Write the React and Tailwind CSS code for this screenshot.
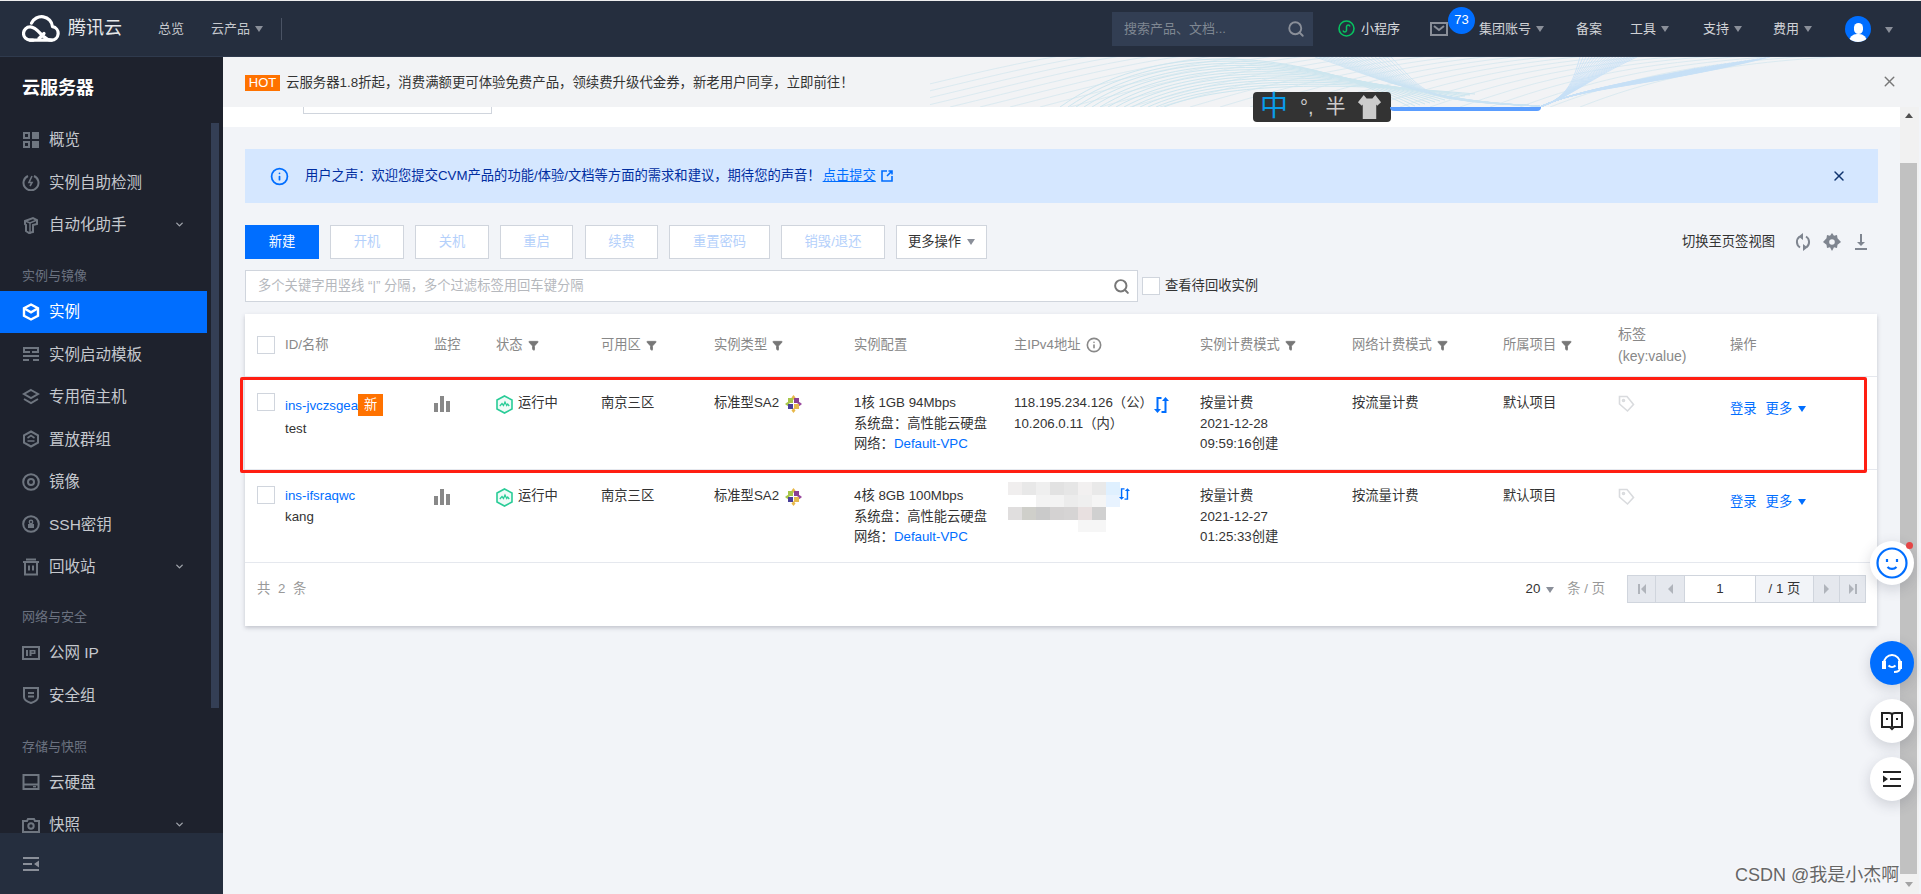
import React from 'react'
import { Search, Filter, Info, X, ChevronDown } from 'lucide-react'

const fontCls = "font-['Liberation_Sans','Noto_Sans_CJK_SC',sans-serif]"

const Caret = ({ className = 'border-t-[#8a8f99]' }) => (
  <span className={`inline-block w-0 h-0 border-x-[4.5px] border-x-transparent border-t-[6px] ${className}`} />
)

function Logo() {
  return (
    <svg width="38" height="27" viewBox="0 0 38 27" fill="none" stroke="#fff" strokeWidth="3.2" strokeLinecap="round" strokeLinejoin="round">
      <path d="M8 25.2h21.5a6.8 6.8 0 0 0 1-13.5 11 11 0 0 0-21-3.5" />
      <path d="M11 25.2H8.2a6.7 6.7 0 0 1 0-13.4c5.5 0 9.5 6.3 13 9.5 2 1.9 4.5 3.9 8.3 3.9" />
      <path d="M17 23.5l5-5" />
    </svg>
  )
}

// the line art behind the promo strip
function Waves() {
  const left = []
  for (let i = 0; i < 26; i++) {
    const o = i * 5
    left.push(`M${i * 30 - 100} 50 C ${i * 30 + 40} ${20 - i}, ${i * 30 + 140} ${-15 + o / 6}, ${i * 30 + 260} ${-10}`)
  }
  const hump = []
  for (let i = 0; i < 14; i++) {
    hump.push(`M${130 + i * 8} 50 C ${220 + i * 6} ${-14 + i * 3}, ${360 + i * 4} ${-14 + i * 3}, ${480 + i * 5} ${50 - i}`)
  }
  const swoop = []
  for (let i = 0; i < 20; i++) {
    swoop.push(`M${385 + i * 4} 0 C ${440 + i * 3} ${18 + i}, ${490} ${44}, ${610} 49`)
  }
  const funnel = []
  for (let i = 0; i < 20; i++) {
    funnel.push(`M${610} 50 C ${640} ${40}, ${644 + i} ${20}, ${650 + i * 3} 0`)
    funnel.push(`M${610} 50 C ${650} ${30}, ${720 + i * 3} ${30 - i}, ${840 - i * 4} ${i * 0.6}`)
  }
  return (
    <svg className="absolute left-[707px] top-0 opacity-80" width="1020" height="50" viewBox="0 0 1020 50" fill="none">
      <g stroke="#cfe6ef" strokeWidth="0.8">
        {left.map((d, i) => <path key={i} d={d} />)}
      </g>
      <g stroke="#c4e3ee" strokeWidth="1">
        {hump.map((d, i) => <path key={i} d={d} />)}
      </g>
      <g stroke="#c2dff3" strokeWidth="0.8">
        {swoop.map((d, i) => <path key={i} d={d} />)}
      </g>
      <g stroke="#bcdcf8" strokeWidth="0.8">
        {funnel.map((d, i) => <path key={i} d={d} />)}
      </g>
    </svg>
  )
}

function TopBar() {
  const right = [
    ['集团账号', true, 'ml-[5px] mr-[32px]'],
    ['备案', false, 'mr-[28px]'],
    ['工具', true, 'mr-[34px]'],
    ['支持', true, 'mr-[31px]'],
    ['费用', true, 'mr-[33px]'],
  ]
  return (
    <div className="h-14 shrink-0 bg-[#252e3e] border-b border-[#2f3a4d] flex items-center pl-[22px] text-[13px] text-[#c5c8cd]">
      <Logo />
      <span className="ml-2 text-[18px] text-[#e6e8ea]">腾讯云</span>
      <span className="ml-[36px]">总览</span>
      <span className="ml-[27px] flex items-center gap-[5px]">云产品 <Caret /></span>
      <span className="ml-[18px] w-px h-[22px] bg-[#4a5364]" />
      <div className="ml-[830px] w-[201px] h-[34px] bg-[#323e53] flex items-center justify-between pl-3 pr-2 text-[#7f8792]">
        <span>搜索产品、文档...</span>
        <Search size={18} strokeWidth={2.5} className="text-[#8a8f99]" />
      </div>
      <div className="ml-[25px] flex items-center gap-[6px]">
        <svg width="17" height="17" viewBox="0 0 17 17" fill="none">
          <circle cx="8.5" cy="8.5" r="7.5" stroke="#07c160" strokeWidth="1.6" />
          <path d="M5 10.5c.5 2 3 2 3.5 0v-4c.5-2 3-2 3.5 0" stroke="#07c160" strokeWidth="1.5" />
        </svg>
        <span className="text-[#d9dbde]">小程序</span>
      </div>
      <div className="ml-[30px] relative">
        <svg className="block" width="18" height="14" viewBox="0 0 18 14" fill="none" stroke="#8a8f99" strokeWidth="2">
          <rect x="1" y="1" width="16" height="12" />
          <path d="M4 4l5 4 5-4" />
        </svg>
        <span className="absolute -top-[15px] left-[18px] w-[27px] h-[27px] rounded-full bg-[#006eff] text-white text-[13px] flex items-center justify-center">73</span>
      </div>
      <div className="ml-[26px] flex items-center text-[#d0d2d6]">
        {right.map(([label, caret, cls]) => (
          <span key={label} className={`flex items-center gap-[5px] ${cls}`}>
            {label}
            {caret && <Caret />}
          </span>
        ))}
        <span className="w-[26px] h-[26px] rounded-full bg-[#006eff] overflow-hidden flex flex-col items-center justify-end">
          <span className="w-[9px] h-[11px] rounded-full bg-white" />
          <span className="w-[18px] h-[8px] rounded-t-full bg-white" />
        </span>
        <span className="ml-[14px]"><Caret /></span>
      </div>
    </div>
  )
}

const iconProps = { width: 18, height: 18, viewBox: '0 0 18 18', fill: 'none', stroke: 'currentColor', strokeWidth: 2 }

const navIcons = {
  overview: <svg {...iconProps} stroke="none" fill="currentColor"><path d="M1 1h7v7H1zM10 1h7v7h-7zM1 10h7v7H1zM10 10h7v7h-7z" /><path d="M3 3h3v3H3zM3 12h3v3H3z" fill="#1e222d" /></svg>,
  check: <svg {...iconProps}><path d="M12 3a7.5 7.5 0 1 1-6 0" /><path d="M10 3 7 9.5h3L8 13" strokeWidth="1.6" /></svg>,
  robot: <svg {...iconProps}><path d="M3 5l8-3 4 2v4l-4 1v7l-4 1-3-2V9L3 8z" /><path d="M3 5l5 2 7-3M8 7v11" strokeWidth="1.4" /></svg>,
  cube: <svg {...iconProps} strokeWidth="2.4"><path d="M9 1.5l7 3.8v7.4l-7 3.8-7-3.8V5.3z" /><path d="M2 5.3l7 4 7-4" /></svg>,
  template: <svg {...iconProps} stroke="none" fill="currentColor"><path d="M1 2h16v2H1zM1 6h7v2H1zM10 6h7v2h-7zM1 10h16v2H1zM1 14h6v2H1zM11 14h6v2h-6zM1 4h2v2H1zM15 4h2v2h-2z" /></svg>,
  layers: <svg {...iconProps}><path d="M9 2l7 4-7 4-7-4z" /><path d="M2 11l7 4 7-4" /></svg>,
  group: <svg {...iconProps}><path d="M9 1.5l7 3.8v7.4l-7 3.8-7-3.8V5.3z" /><path d="M5.5 8 9 5.5 12.5 8M5.5 11h7" strokeWidth="1.6" /></svg>,
  disc: <svg {...iconProps}><circle cx="9" cy="9" r="7.8" /><circle cx="9" cy="9" r="3" /></svg>,
  key: <svg {...iconProps}><circle cx="9" cy="9" r="7.8" /><rect x="6" y="9" width="6" height="4" fill="currentColor" stroke="none" /><circle cx="9" cy="7" r="1.7" strokeWidth="1.4" /></svg>,
  trash: <svg {...iconProps}><path d="M1 4h16M3 4v12.5h12V4M4 1.5h10M7 7.5v5M11 7.5v5" /></svg>,
  ip: <svg {...iconProps} strokeWidth="0" fill="currentColor"><path fillRule="evenodd" d="M0 2h18v14H0zM2 4v10h14V4zM4 6h2v6H4zM7.5 6h6v4h-4v2h-2zM9.5 7.5V8.5h2.5V7.5z" /></svg>,
  shield: <svg {...iconProps}><path d="M2 2h14v9c0 3-4 5-7 6-3-1-7-3-7-6z" /><path d="M6 7h6M6 10.5h6" /></svg>,
  disk: <svg {...iconProps}><rect x="1.5" y="2" width="15" height="14" /><path d="M1.5 11.5h15" /><path d="M11 13.7h3" strokeWidth="1.4" /></svg>,
  camera: <svg {...iconProps}><path d="M1 5h4l1-2h6l1 2h4v11H1z" /><circle cx="9" cy="10" r="2.7" /></svg>,
}

const navGroups = [
  { items: [['概览', 'overview'], ['实例自助检测', 'check'], ['自动化助手', 'robot', true]] },
  {
    title: '实例与镜像',
    gap: 'mt-[11px]',
    items: [['实例', 'cube', false, true], ['实例启动模板', 'template'], ['专用宿主机', 'layers'], ['置放群组', 'group'], ['镜像', 'disc'], ['SSH密钥', 'key'], ['回收站', 'trash', true]],
  },
  { title: '网络与安全', gap: 'mt-[10px]', items: [['公网 IP', 'ip'], ['安全组', 'shield']] },
  { title: '存储与快照', gap: 'mt-[11px]', items: [['云硬盘', 'disk'], ['快照', 'camera', true]] },
]

function Sidebar() {
  return (
    <aside className="relative w-[223px] shrink-0 bg-[#1e222d] flex flex-col overflow-hidden">
      <div className="h-[61.5px] pt-[19px] pl-[22px] text-[18px] leading-6 font-bold text-white">云服务器</div>
      <div className="flex-1 overflow-hidden">
        {navGroups.map((group, g) => (
          <div key={g} className={group.gap}>
            {group.title && <div className="h-[33.5px] pt-[4px] pl-[22px] flex items-center text-[13px] text-[#6b7280]">{group.title}</div>}
            {group.items.map(([label, icon, arrow, active]) => (
              <div
                key={label}
                className={`w-[207px] h-[42.5px] flex items-center pl-[22px] text-[15.5px] ${active ? 'bg-[#006eff] text-white' : 'text-[#c5c8cd]'}`}
              >
                <span className={`w-[27px] ${active ? 'text-white' : 'text-[#6f7680]'}`}>{navIcons[icon]}</span>
                <span>{label}</span>
                {arrow && <ChevronDown size={11} strokeWidth={3} className="ml-auto mr-[22px] text-[#a0a4ab]" />}
              </div>
            ))}
          </div>
        ))}
      </div>
      <div className="h-[61px] shrink-0 bg-[#252e3e] flex items-center pl-[23px] text-[#8a8f99]">
        <svg width="16" height="14" viewBox="0 0 16 14" fill="currentColor"><path d="M0 0h16v2H0zM0 6h9v2H0zM0 12h16v2H0zM16 3.5v7L11 7z" /></svg>
      </div>
      <span className="absolute left-[211px] top-[66px] w-2 h-[585px] bg-[#343f55]" />
    </aside>
  )
}

const columns = 'grid grid-cols-[40px_149px_62px_105px_113px_140px_160px_186px_152px_151px_115px_112px_147px]'

function Check({ className = '' }) {
  return <span className={`block w-[18px] h-[18px] bg-white border border-[#d0d5dd] ${className}`} />
}

function HeadCell({ children, filter }) {
  return (
    <div className="flex items-center gap-[5px] text-[#888]">
      <span>{children}</span>
      {filter && <Filter size={11} fill="currentColor" className="text-[#777]" />}
    </div>
  )
}

function TableHead() {
  return (
    <div className={`${columns} h-[63px] items-center border-b border-[#e5e8ee]`}>
      <div className="pl-3"><Check /></div>
      <HeadCell>ID/名称</HeadCell>
      <HeadCell>监控</HeadCell>
      <HeadCell filter>状态</HeadCell>
      <HeadCell filter>可用区</HeadCell>
      <HeadCell filter>实例类型</HeadCell>
      <HeadCell>实例配置</HeadCell>
      <div className="flex items-center gap-[5px] text-[#888]">主IPv4地址 <Info size={16} strokeWidth={2.4} /></div>
      <HeadCell filter>实例计费模式</HeadCell>
      <HeadCell filter>网络计费模式</HeadCell>
      <HeadCell filter>所属项目</HeadCell>
      <div className="text-[#888] text-[14px] leading-[22px]">标签<br />(key:value)</div>
      <HeadCell>操作</HeadCell>
    </div>
  )
}

function Bars() {
  return (
    <svg width="16" height="16" viewBox="0 0 16 16" fill="#888"><path d="M0 7h4v9H0zM6 0h4v16H6zM12 5h4v11h-4z" /></svg>
  )
}

function StatusHex() {
  return (
    <svg width="17" height="19" viewBox="0 0 17 19" fill="none">
      <path d="M8.5 1 16 5v9l-7.5 4L1 14V5z" stroke="#29cc97" strokeWidth="1.6" fill="#effbf7" />
      <path d="M3.8 11 6 8.5l1.5 2L9 7l1.7 3.5 1-1.5 1.5 2" stroke="#29cc97" strokeWidth="1.3" />
    </svg>
  )
}

function Pinwheel() {
  return (
    <svg width="17" height="18" viewBox="0 0 17 18">
      <path d="M8.5 0l2 2.5-2 2.5-2-2.5z" fill="#e8b84a" />
      <path d="M0 9l2.5-2 2.500 2-2.500 2z" fill="#a8c64a" />
      <path d="M17 9l-2.5-2-2.500 2 2.500 2z" fill="#9a4a9e" />
      <path d="M8.5 18l2-2.5-2-2.5-2 2.5z" fill="#e8b84a" />
      <path d="M3 3h5v5H3z" fill="#a8c64a" />
      <path d="M9 3h5v5H9z" fill="#8a3f94" />
      <path d="M3 9h5v5H3z" fill="#4a3f9a" />
      <path d="M9 9h5v5H9z" fill="#e5b94e" />
    </svg>
  )
}

function SyncIcon() {
  return (
    <svg width="15" height="18" viewBox="0 0 15 18" fill="#006eff">
      <path d="M1 1h5v2H3v10h2.5L2 17l-3.5-4H1z" transform="translate(1.5 0)" />
      <path d="M14 17H9v-2h3V5H9.5L13 1l3.5 4H14z" transform="translate(-1.5 0)" />
    </svg>
  )
}

function TagIcon() {
  return (
    <svg width="17" height="18" viewBox="0 0 17 18" fill="none" stroke="#d9dbde" strokeWidth="1.6">
      <path d="M1.5 1.5H9l6.5 8-6 6.5-8-7z" />
      <circle cx="5.5" cy="5.5" r="1" />
    </svg>
  )
}

const mosaic = [
  'bg-[#f0eeee]', 'bg-[#e8e8e8]', 'bg-[#efefef]', 'bg-[#e2e2e2]', 'bg-[#e6e6e6]', 'bg-[#f2f0f0]', 'bg-[#e9e9e9]', 'bg-[#dff0ff]',
  'bg-white', 'bg-white', 'bg-[#f3f3f3]', 'bg-[#f3f3f3]', 'bg-[#ececec]', 'bg-[#efefef]', 'bg-[#f5f5f5]', 'bg-[#e8f3ff]',
  'bg-[#e0dede]', 'bg-[#cfcfca]', 'bg-[#cacaca]', 'bg-[#d4d2d2]', 'bg-[#d6d4d4]', 'bg-[#e8e0e0]', 'bg-[#d0d0d0]', 'bg-white',
  'bg-white', 'bg-white', 'bg-white', 'bg-white', 'bg-white', 'bg-[#f6f6f6]', 'bg-[#f6f6f6]', 'bg-white',
]

function Row({ id, name, isNew, spec, ip, date, time }) {
  return (
    <div className={`${columns} h-[93px] pt-[16px] leading-[20.5px] text-[#333] border-b border-[#e5e8ee]`}>
      <div className="pl-3"><Check /></div>
      <div>
        <div className={`flex items-center ${isNew ? 'pt-[3px]' : ''}`}>
          <span className="text-[#006eff]">{id}</span>
          {isNew && <span className="w-[25px] h-[22px] bg-[#ff7200] text-white flex items-center justify-center -mt-[2px]">新</span>}
        </div>
        <div className={isNew ? 'pt-[2px]' : ''}>{name}</div>
      </div>
      <div className="pt-[3px]"><Bars /></div>
      <div className="flex items-start gap-[5px]">
        <span className="pt-[2px]"><StatusHex /></span>
        <span>运行中</span>
      </div>
      <div>南京三区</div>
      <div className="flex items-start gap-[6px]">
        <span>标准型SA2</span>
        <span className="pt-[2px]"><Pinwheel /></span>
      </div>
      <div>
        <div>{spec}</div>
        <div>系统盘：高性能云硬盘</div>
        <div>网络：<span className="text-[#006eff]">Default-VPC</span></div>
      </div>
      {ip ? (
        <div className="flex items-start gap-[5px]">
          <div>
            <div>118.195.234.126（公）</div>
            <div>10.206.0.11（内）</div>
          </div>
          <span className="pt-[3px] -ml-[4px]"><SyncIcon /></span>
        </div>
      ) : (
        <div className="flex items-start -ml-[6px] -mt-[4px]">
          <div className="grid grid-cols-8 w-[112px] h-[50px]">
            {mosaic.map((c, i) => <span key={i} className={c} />)}
          </div>
          <span className="pt-[3px] -ml-[1px] w-[11px] overflow-hidden flex justify-end"><SyncIcon /></span>
        </div>
      )}
      <div>
        <div>按量计费</div>
        <div>{date}</div>
        <div>{time}创建</div>
      </div>
      <div>按流量计费</div>
      <div>默认项目</div>
      <div className="pt-[2px]"><TagIcon /></div>
      <div className="pt-[6px] flex items-start gap-[9px] text-[#006eff]">
        <span>登录</span>
        <span className="flex items-center gap-[6px]">更多 <Caret className="border-t-[#006eff]" /></span>
      </div>
    </div>
  )
}

function Pager() {
  const btn = 'h-full bg-[#e5e8ee] border-r border-[#d0d5dd] flex items-center justify-center text-[#b0b4bb]'
  return (
    <div className="w-[239px] h-[28px] border border-[#d0d5dd] flex">
      <span className={`${btn} w-[28px]`}>
        <svg width="8" height="10" fill="currentColor"><path d="M0 0h2v10H0zM8 0v10L3 5z" /></svg>
      </span>
      <span className={`${btn} w-[29px]`}>
        <svg width="6" height="10" fill="currentColor"><path d="M6 0v10L1 5z" /></svg>
      </span>
      <span className="w-[71px] bg-white border-r border-[#d0d5dd] flex items-center justify-center text-[#333]">1</span>
      <span className="w-[58px] bg-[#f2f4f8] border-r border-[#d0d5dd] flex items-center justify-center text-[#333]">/ 1 页</span>
      <span className={`${btn} w-[26px]`}>
        <svg width="6" height="10" fill="currentColor"><path d="M0 0v10l5-5z" /></svg>
      </span>
      <span className={`${btn} flex-1 border-r-0`}>
        <svg width="8" height="10" fill="currentColor"><path d="M0 0v10l5-5zM6 0h2v10H6z" /></svg>
      </span>
    </div>
  )
}

function Toolbar() {
  const off = [['开机', 'w-[74px] ml-[11px]'], ['关机', 'w-[74px] ml-[11px]'], ['重启', 'w-[73px] ml-[11px]'], ['续费', 'w-[73px] ml-[12px]'], ['重置密码', 'w-[101px] ml-[11px]'], ['销毁/退还', 'w-[104px] ml-[11px]']]
  return (
    <div className="mt-[22px] h-[34px] flex items-center">
      <button className="w-[74px] h-full bg-[#006eff] text-white">新建</button>
      {off.map(([label, w]) => (
        <button key={label} className={`${w} h-full bg-white border border-[#d0d5dd] text-[#b4d0fb]`}>{label}</button>
      ))}
      <button className="w-[91px] h-full ml-[11px] bg-white border border-[#d0d5dd] text-[#333] flex items-center justify-center gap-[6px]">
        更多操作 <Caret />
      </button>
      <span className="ml-auto mr-[20px] text-[#333]">切换至页签视图</span>
      <div className="flex items-center gap-[12px] mr-[7px] text-[#7f8590]">
        <svg width="16" height="18" viewBox="0 0 16 18" fill="none" stroke="currentColor" strokeWidth="2">
          <path d="M4.5 3.8A6.5 6.5 0 0 0 5 14.5M11.5 14.2A6.5 6.5 0 0 0 11 3.5" />
          <path d="M8 0v7L3.5 3.5zM8 18v-7l4.5 3.500z" fill="currentColor" stroke="none" />
        </svg>
        <svg width="18" height="18" viewBox="0 0 18 18" fill="currentColor">
          <path fillRule="evenodd" d="M9 0l2 2.8 3-.8.5 3.2L18 9l-3.5 2.8-.5 3.2-3-.8L9 18l-2-3.800-3 .8-.5-3.200L0 9l3.500-3.800L4 2l3 .8zM9 6.200a2.800 2.800 0 1 0 0 5.600 2.800 2.800 0 0 0 0-5.600z" />
        </svg>
        <svg width="16" height="18" viewBox="0 0 16 18" fill="currentColor">
          <path d="M7 1h2v8h3l-4 4-4-4h3zM2 15h12v2H2z" />
        </svg>
      </div>
    </div>
  )
}

function Content() {
  return (
    <div className="flex-1 min-w-0 bg-[#f2f4f8] overflow-hidden">
      <div className="h-5 bg-white">
        <div className="ml-[80px] w-[189px] h-[7px] border border-t-0 border-[#d0d5dd]" />
      </div>
      <div className="pl-[22px] pr-[24px] pt-[22px]">
        <div className="w-[1633px] h-[54px] bg-[#d5e7ff] flex items-center pl-[25px] pr-[31px] text-[#002da0]">
          <Info size={19} strokeWidth={2.2} className="text-[#006eff]" />
          <span className="ml-[16px]">用户之声：欢迎您提交CVM产品的功能/体验/文档等方面的需求和建议，期待您的声音！</span>
          <span className="ml-[2px] text-[#006eff] underline">点击提交</span>
          <svg className="ml-[5px]" width="12" height="12" viewBox="0 0 12 12" fill="none" stroke="#006eff" strokeWidth="1.6">
            <path d="M6 1H1v10h10V6M6 6l5-5M7.5 1H11v3.5" />
          </svg>
          <X size={16} strokeWidth={2.2} className="ml-auto text-[#10346f]" />
        </div>
        <Toolbar />
        <div className="mt-[11px] flex items-center">
          <div className="w-[893px] h-8 bg-white border border-[#d0d5dd] flex items-center justify-between pl-[12px] pr-[7px] text-[#b5b8bd]">
            <span>多个关键字用竖线 “|” 分隔，多个过滤标签用回车键分隔</span>
            <Search size={17} strokeWidth={2.8} className="text-[#777]" />
          </div>
          <Check className="ml-1" />
          <span className="ml-[5px] text-[#333]">查看待回收实例</span>
        </div>
        <div className="mt-3 w-[1632px] bg-white shadow-[0_2px_4px_rgba(54,58,80,0.25)]">
          <TableHead />
          <Row id="ins-jvczsgea" name="test" isNew spec="1核 1GB 94Mbps" ip date="2021-12-28" time="09:59:16" />
          <Row id="ins-ifsraqwc" name="kang" spec="4核 8GB 100Mbps" date="2021-12-27" time="01:25:33" />
          <div className="h-[63px] pb-[11px] flex items-center justify-between pl-3 pr-[11px]">
            <span className="text-[#999] tracking-[2px]">共 2 条</span>
            <div className="flex items-center">
              <span className="text-[#333]">20</span>
              <span className="ml-[6px]"><Caret /></span>
              <span className="ml-[13px] mr-[22px] text-[#999]">条 / 页</span>
              <Pager />
            </div>
          </div>
        </div>
      </div>
    </div>
  )
}

function ScrollBar() {
  return (
    <div className="w-[19px] shrink-0 bg-[#f1f1f1] pr-[2px] flex flex-col">
      <div className="h-[56px] flex items-start justify-center pt-[6px]">
        <span className="w-0 h-0 border-x-[4px] border-x-transparent border-b-[5px] border-b-[#505050]" />
      </div>
      <div className="flex-1 bg-[#c1c1c1]" />
      <div className="h-[20px] flex items-center justify-center">
        <span className="w-0 h-0 border-x-[4px] border-x-transparent border-t-[5px] border-t-[#a3a3a3]" />
      </div>
    </div>
  )
}

const floatBtn = 'absolute left-[1870px] w-11 h-11 rounded-full flex items-center justify-center shadow-[0_4px_14px_rgba(54,58,80,0.2)]'

function Floats() {
  return (
    <>
      <div className={`${floatBtn} top-[541px] bg-white`}>
        <svg width="32" height="32" viewBox="0 0 32 32" fill="none" stroke="#006eff" strokeWidth="2.2">
          <circle cx="16" cy="16" r="14.5" />
          <path d="M11 12v3M21 12v3" />
          <path d="M11.5 20c2.5 2.5 6.5 2.5 9 0" />
        </svg>
        <span className="absolute top-[1px] right-[1px] w-[7px] h-[7px] rounded-full bg-[#e54545]" />
      </div>
      <div className={`${floatBtn} top-[641px] bg-[#006eff]`}>
        <svg width="24" height="24" viewBox="0 0 24 24" fill="none" stroke="#fff" strokeWidth="2">
          <path d="M4 12a8 8 0 0 1 16 0" />
          <path d="M3 11h2v6H3zM19 11h2v6h-2z" fill="#fff" />
          <path d="M8.5 14.5c2 2 5 2 7 0M20 17c0 3-3 4-6 4" />
        </svg>
      </div>
      <div className={`${floatBtn} top-[699px] bg-white`}>
        <svg width="22" height="20" viewBox="0 0 22 20" fill="none" stroke="#222" strokeWidth="2">
          <path d="M1 2h7c2 0 3 1 3 2 0-1 1-2 3-2h7v14h-8l-2 2-2-2H1zM11 4v12" />
          <path d="M5 8h2M15 8h2" />
        </svg>
      </div>
      <div className={`${floatBtn} top-[757px] bg-white`}>
        <svg width="18" height="16" viewBox="0 0 18 16" fill="#222"><path d="M0 0h18v2H0zM7 7h11v2H7zM0 14h18v2H0zM0 4.5v7L5 8z" /></svg>
      </div>
    </>
  )
}

export default function App() {
  return (
    <div className={`relative w-full h-[894px] overflow-hidden flex flex-col pt-px bg-[#eee] text-[13.3px] ${fontCls}`}>
      <TopBar />
      <div className="flex-1 min-h-0 flex">
        <Sidebar />
        <main className="flex-1 min-w-0 flex flex-col">
          <div className="relative h-[50px] shrink-0 bg-[#f2f3f5] overflow-hidden flex items-center pl-[22px] pt-[2px] text-[13.4px] text-[#333]">
            <Waves />
            <span className="relative w-[35px] h-4 bg-[#ff7200] text-white text-[13px] flex items-center justify-center">HOT</span>
            <span className="relative ml-[6px]">云服务器1.8折起，消费满额更可体验免费产品，领续费升级代金券，新老用户同享，立即前往！</span>
            <X size={17} className="absolute right-[23px] top-[16px] text-[#777]" />
          </div>
          <div className="flex-1 min-h-0 flex">
            <Content />
            <ScrollBar />
            <div className="w-[2px] bg-[#f2f4f8]" />
          </div>
        </main>
      </div>

      {/* red marker someone drew over the screenshot */}
      <div className="absolute left-[240px] top-[377px] w-[1627px] h-[96px] border-[3px] border-[#ff1e12] rounded-[2px]" />

      {/* IME toolbar */}
      <div className="absolute left-[1253px] top-[92px] w-[138px] h-[30px] rounded bg-[#333] flex items-center pl-[7px] text-[#ccc] text-[20px]">
        <span className="text-[#0a9be8] text-[28px] leading-none">中</span>
        <span className="ml-[12px]">°,</span>
        <span className="ml-[12px]">半</span>
        <svg className="ml-[11px]" width="25" height="24" viewBox="0 0 26 20" fill="#ccc" preserveAspectRatio="none"><path d="M7 0l3 3h6l3-3 6 6-4 3-1-1v12H6V8L5 9 1 6z" /></svg>
      </div>
      <div className="absolute left-[1390px] top-[107px] w-[151px] h-1 bg-[#5a9dff] rounded-b" />

      <Floats />

      <div className="absolute left-[1735px] top-[863px] text-[18px] leading-6 text-[#666] [text-shadow:0_0_3px_#fff]">CSDN @我是小杰啊</div>
    </div>
  )
}
